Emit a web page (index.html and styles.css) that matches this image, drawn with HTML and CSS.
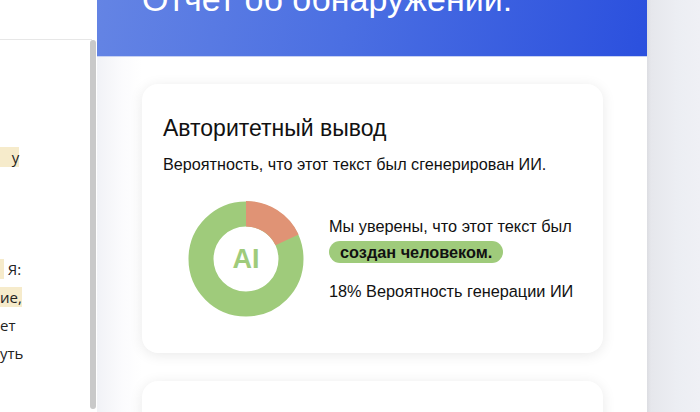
FILE: index.html
```html
<!DOCTYPE html>
<html lang="ru">
<head>
<meta charset="utf-8">
<link rel="stylesheet" href="styles.css">
</head>
<body>
<aside class="left">
  <div class="left-top"></div>
  <div class="left-body">
    <div class="doc">
      <div class="line"><span class="hl">&nbsp;&nbsp; у</span></div>
      <div class="line"></div>
      <div class="line"></div>
      <div class="line"></div>
      <div class="line"><span class="hl">&nbsp;</span> Я:</div>
      <div class="line"><span class="hl">ие,</span></div>
      <div class="line">ет</div>
      <div class="line">уть</div>
    </div>
    <div class="scrollbar"></div>
  </div>
</aside>
<main class="main">
  <header class="header">
    <h1 class="header-title">Отчет об обнаружении:</h1>
  </header>
  <section class="content">
    <div class="card">
      <h2 class="card-title">Авторитетный вывод</h2>
      <p class="card-sub">Вероятность, что этот текст был сгенерирован ИИ.</p>
      <div class="result">
        <div class="donut">
          <svg width="116" height="116" viewBox="0 0 116 116">
            <circle cx="58" cy="58" r="45" fill="none" stroke="#9fcb7b" stroke-width="25"/>
            <path d="M58 0 A58 58 0 0 1 110.6 33.5 L87.5 44.3 A32.5 32.5 0 0 0 58 25.5 Z" fill="#e09375"/>
          </svg>
          <span class="donut-label">AI</span>
        </div>
        <div class="verdict">
          <p class="verdict-line">Мы уверены, что этот текст был</p>
          <span class="pill">создан человеком.</span>
          <p class="verdict-prob">18% Вероятность генерации ИИ</p>
        </div>
      </div>
    </div>
    <div class="card card-next"></div>
  </section>
</main>
<div class="right"></div>
</body>
</html>
```
FILE: styles.css
```css
html, body {
  margin: 0;
  padding: 0;
}
body {
  width: 700px;
  height: 412px;
  overflow: hidden;
  display: flex;
  font-family: "Liberation Sans", Arial, sans-serif;
  background: #fff;
  color: #111;
}
.left {
  width: 97px;
  flex: none;
  display: flex;
  flex-direction: column;
  background: #fff;
}
.left-top {
  height: 39px;
  width: 92px;
  border-bottom: 1px solid #e7e7e7;
  flex: none;
}
.left-body {
  flex: 1;
  display: flex;
  min-height: 0;
}
.doc {
  flex: 1;
  padding-top: 103px;
  font-family: "Open Sans", "Noto Sans", sans-serif;
  font-size: 15px;
  line-height: 28px;
  color: #222;
  white-space: nowrap;
  overflow: hidden;
}
.line {
  height: 28px;
}
.hl {
  background: #f6ebcb;
}
.scrollbar {
  width: 6px;
  flex: none;
  margin: 0 1px 3px 0;
  background: #c9c9c9;
  border-radius: 3px;
}
.main {
  width: 550px;
  flex: none;
  display: flex;
  flex-direction: column;
  overflow: hidden;
  background: linear-gradient(90deg, #f1f2f6 0px, #fbfbfd 25px, #fff 45px);
}
.header {
  height: 56px;
  flex: none;
  overflow: hidden;
  border-bottom: 1px solid #c7d1f2;
  background: linear-gradient(100deg, #6484e4 0%, #4b6fe2 45%, #2b50de 100%);
}
.header-title {
  margin: -21px 0 0 45px;
  font-size: 34px;
  line-height: 40px;
  font-weight: normal;
  color: #fff;
  white-space: nowrap;
}
.content {
  padding: 27px 44px 0 45px;
  display: flex;
  flex-direction: column;
  gap: 28px;
}
.card {
  background: #fff;
  border-radius: 16px;
  box-shadow: 0 2px 14px rgba(0, 0, 0, 0.09);
  padding: 31px 21px 36px;
}
.card-title {
  margin: 0;
  font-size: 23px;
  line-height: 26px;
  font-weight: normal;
  color: #111;
}
.card-sub {
  margin: 14px 0 0;
  font-size: 16.2px;
  line-height: 19px;
  color: #111;
}
.result {
  margin-top: 27px;
  display: flex;
  align-items: center;
  gap: 25px;
  padding-left: 25px;
}
.donut {
  width: 116px;
  height: 116px;
  position: relative;
  flex: none;
}
.donut svg {
  display: block;
}
.donut-label {
  position: absolute;
  inset: 0;
  display: flex;
  align-items: center;
  justify-content: center;
  font-size: 27px;
  font-weight: bold;
  color: #9fcb7b;
}
.verdict {
  display: flex;
  flex-direction: column;
  align-items: flex-start;
  font-size: 16.3px;
  line-height: 19px;
  color: #111;
}
.verdict-line {
  margin: 0;
}
.pill {
  margin-top: 5px;
  background: #9fcb7b;
  border-radius: 11px;
  padding: 2px 11px;
  line-height: 18px;
  font-weight: bold;
  color: #111;
}
.verdict-prob {
  margin: 19px 0 0;
}
.card-next {
  height: 80px;
  padding: 0;
}
.right {
  flex: 1;
  background: linear-gradient(90deg, #dcdde2 0px, #e6e7ec 4px, #eceef3 30px, #eff0f5 100%);
}
```
